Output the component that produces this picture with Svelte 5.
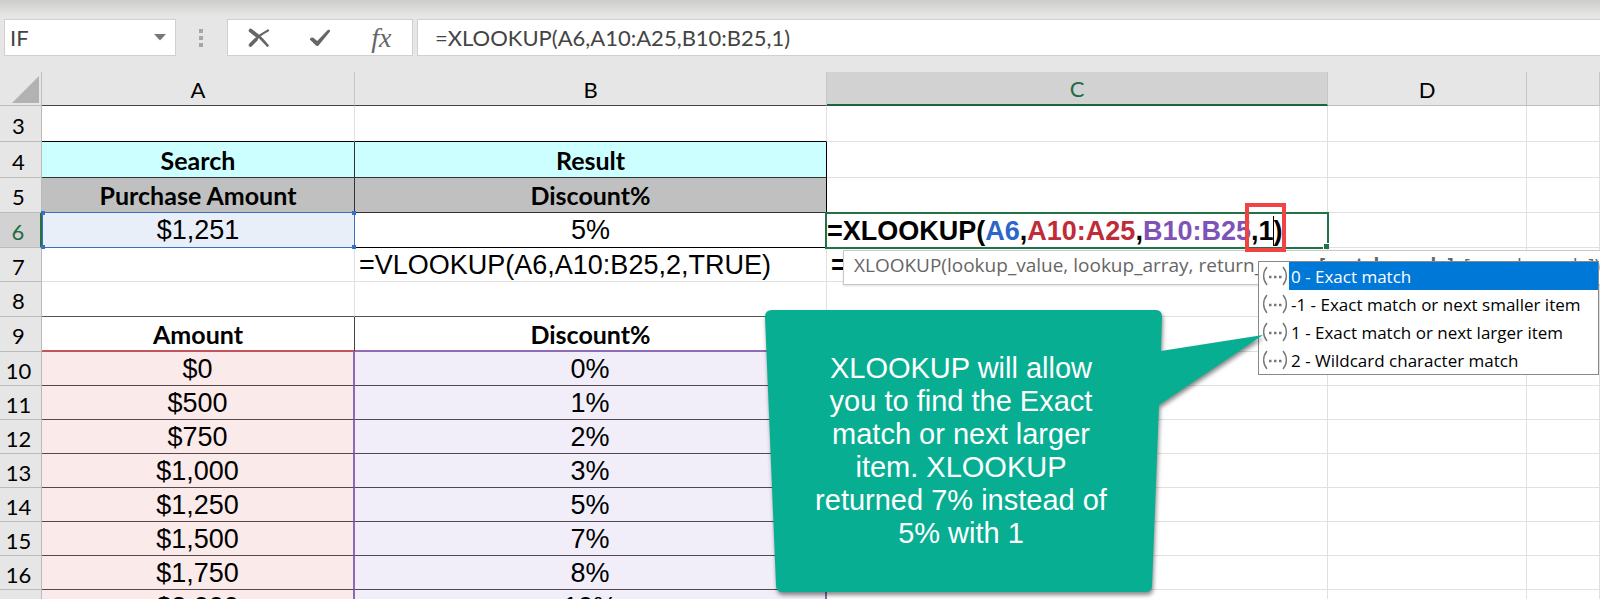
<script>
let nameBox = 'IF';
let formula = '=XLOOKUP(A6,A10:A25,B10:B25,1)';
let picked = 0;

const columns = ['A', 'B', 'C', 'D', ''];

const rows = [
    { n: 3, height: 36, kind: 'blank', a: '', b: '' },
    { n: 4, height: 36, kind: 'search', a: 'Search', b: 'Result' },
    { n: 5, height: 35, kind: 'sub', a: 'Purchase Amount', b: 'Discount%' },
    { n: 6, height: 35, kind: 'active', a: '$1,251', b: '5%' },
    { n: 7, height: 34, kind: 'note', a: '', b: '=VLOOKUP(A6,A10:B25,2,TRUE)', c: '=' },
    { n: 8, height: 35, kind: 'spacer', a: '', b: '' },
    { n: 9, height: 35, kind: 'title', a: 'Amount', b: 'Discount%' },
    { n: 10, height: 34, kind: 'data', a: '$0', b: '0%' },
    { n: 11, height: 34, kind: 'data', a: '$500', b: '1%' },
    { n: 12, height: 34, kind: 'data', a: '$750', b: '2%' },
    { n: 13, height: 34, kind: 'data', a: '$1,000', b: '3%' },
    { n: 14, height: 34, kind: 'data', a: '$1,250', b: '5%' },
    { n: 15, height: 34, kind: 'data', a: '$1,500', b: '7%' },
    { n: 16, height: 34, kind: 'data', a: '$1,750', b: '8%' },
    { n: 17, height: 34, kind: 'data', a: '$2,000', b: '10%' }
];

const options = [
    '0 - Exact match',
    '-1 - Exact match or next smaller item',
    '1 - Exact match or next larger item',
    '2 - Wildcard character match'
];
</script>

<div class="app">
    <header class="bar">
        <div class="namebox">
            <input aria-label="Name box" bind:value={nameBox} />
            <button aria-label="Open name list">
                <svg width="12" height="7" viewBox="0 0 12 7"><path d="M0 0h12L6 6.5z" fill="#777" /></svg>
            </button>
        </div>
        <svg class="grip" width="4" height="18" viewBox="0 0 4 18" fill="#a6a6a6">
            <rect width="4" height="4" /><rect y="7" width="4" height="4" /><rect y="14" width="4" height="4" />
        </svg>
        <div class="actions">
            <button aria-label="Cancel">
                <svg width="22" height="20" viewBox="0 0 22 20" fill="none" stroke="#666" stroke-linecap="round">
                    <path d="M2.5 2.5C7 5 14 11 19.5 17.5" stroke-width="2.6" />
                    <path d="M2.5 2.5L10 8.5" stroke-width="3.6" />
                    <path d="M20 2.5C14 5.5 8 10 2.5 17" stroke-width="2.2" />
                    <path d="M2.5 17L8 11.5" stroke-width="3.6" />
                </svg>
            </button>
            <button aria-label="Enter">
                <svg width="22" height="18" viewBox="0 0 22 18"><path d="M.8 10.5C1.500 8.500 3.500 8 5 9.200L8.200 12 18.500 1.200C19.500.3 21.500 1 21 2.500L9.500 16.500Q8.300 17.600 7 16.500z" fill="#666" /></svg>
            </button>
            <button class="fx" aria-label="Insert function">fx</button>
        </div>
        <input class="formula" aria-label="Formula bar" bind:value={formula} />
    </header>

    <div class="sheet">
        <table>
            <colgroup>
                <col class="w-head" /><col class="w-a" /><col class="w-b" /><col class="w-c" /><col class="w-d" /><col />
            </colgroup>
            <thead>
                <tr>
                    <th class="corner" aria-label="Select all">
                        <svg width="27" height="27" viewBox="0 0 27 27"><path d="M27 0v27H0z" fill="#b2b2b2" /></svg>
                    </th>
                    {#each columns as col}
                    <th class="col" class:dark={col === 'A' || col === 'B'} class:current={col === 'C'}>{col}</th>
                    {/each}
                </tr>
            </thead>
            <tbody>
                {#each rows as row}
                <tr class={row.kind} style="height: {row.height}px">
                    <th class="num">{row.n}</th>
                    <td class="a">{row.a}{#if row.kind === 'active'}<span class="range"><i></i><i></i><i></i><i></i></span>{/if}</td>
                    <td class="b">{row.b}</td>
                    <td class="c">
                        {#if row.kind === 'active'}
                        <div class="editor">=XLOOKUP(<span class="blue">A6</span>,<span class="red">A10:A25</span>,<span class="purple">B10:B25</span><span class="boxed">,1<span class="caret"></span>)</span></div>
                        {:else}{row.c || ''}{/if}
                    </td>
                    <td></td>
                    <td></td>
                </tr>
                {/each}
            </tbody>
        </table>

        <div class="tip">XLOOKUP(lookup_value, lookup_array, return_array, <b>[match_mode]</b>, [search_mode])</div>

        <ul class="menu" role="listbox" aria-label="match_mode">
            {#each options as option, i}
            <li role="option" aria-selected={picked === i}>
                <svg width="26" height="20" viewBox="0 0 26 20" fill="none" stroke="#777" stroke-width="1.4">
                    <path d="M5 1C.5 6.500.5 13.500 5 19M21 1C25.500 6.500 25.500 13.500 21 19" />
                    <path d="M7 11h2.500M12 11h2.500M17 11h2.500" stroke-width="2.5" />
                </svg>
                <button on:click={() => picked = i}>{option}</button>
            </li>
            {/each}
        </ul>

        <div class="callout">
            <svg width="510" height="296" viewBox="0 0 510 296">
                <path d="M7 0H391Q397 0 397 7L396 41 498 25 394 95 387 276Q387 282 380 282H17Q11 282 11 275L0 7Q0 0 7 0z" fill="#08ae91" />
            </svg>
            <p>XLOOKUP will allow you to find the Exact match or next larger item. XLOOKUP returned 7% instead of 5% with 1</p>
        </div>
    </div>
</div>

<style>
:global(body) {margin: 0; overflow: hidden;}

.app {height: 100vh; overflow: hidden; background: linear-gradient(#cdcdcb, #e6e6e6 16px); font-family: Lato, "Liberation Sans", sans-serif; color: #000;}

button, input {border: 0; padding: 0; margin: 0; background: none; font: inherit; color: inherit; outline: none;}

button {display: flex; align-items: center; justify-content: center;}

.bar {display: flex; align-items: center; padding: 19px 0 16px 4px; font-size: 22px; color: #444;}

.namebox, .actions, .formula {box-sizing: border-box; height: 37px; background: #fff; border: 1px solid #d0d0d0;}

.namebox {display: flex; width: 172px; padding: 0 9px 0 5px;}
.namebox input {flex: 1; min-width: 0;}

.grip {margin: 0 24px 0 23px;}

.actions {display: flex; width: 186px;}
.actions button {flex: 1;}
.actions .fx {font: italic 28px "Liberation Serif", serif; color: #666;}

.formula {flex: 1; min-width: 0; margin-left: 4px; padding-left: 17px; border-right: 0;}

.sheet {position: relative;}

table {width: 100%; table-layout: fixed; border-collapse: separate; border-spacing: 0;}

.w-head {width: 42px;}
.w-a {width: 313px;}
.w-b {width: 472px;}
.w-c {width: 501px;}
.w-d {width: 199px;}

th, td {box-sizing: border-box; padding: 0; border: 0 solid #e0e0e0; border-width: 0 1px 1px 0; white-space: nowrap; line-height: 30px; font-weight: 400;}

thead th {height: 34px; padding-top: 2px; font-size: 22px; border-color: #bdbdbd; background: #e6e6e6;}
.col {border-right-color: #c6c6c6;}
.col.dark {border-bottom-color: #444;}
.col.current {background: #d2d2d2; color: #1f6b42; border-bottom: 2px solid #14683c;}
.corner {line-height: 0; text-align: right; padding-right: 2px;}

.num {background: #e6e6e6; border-color: #bbb; padding: 4px 4px 0 0; font-size: 22px; line-height: 28px;}
.active .num {background: #d2d2d2; color: #1f6b42; border-right: 2px solid #217346;}

td {position: relative; background: #fff; font-family: "Liberation Sans", Arial, sans-serif; font-size: 27px; text-align: center;}

.c {text-align: left; font-weight: 700; padding-left: 4px;}

.search td, .sub td, .title td {font-family: Lato, sans-serif; font-size: 25px; font-weight: 700;}
.blank .a, .blank .b {border-bottom-color: #000;}
.search .a, .search .b {background: #cff; border-color: #333;}
.sub .a, .sub .b {background: #c0c0c0; border-color: #333;}
.search .b, .sub .b {border-right-color: #000;}
.active .b {border-bottom-color: #000;}
.active .a {background: #e9eff9;}
.note .b {text-align: left; padding-left: 4px;}
.spacer .a, .spacer .b {border-bottom-color: #555;}
.title .a {border-right-color: #444; border-bottom: 2px solid #c4545c;}
.title .b {border-bottom: 2px solid #8f6bb8;}
.data .a {background: #faeaea; border-bottom-color: #54484c; border-right: 2px solid #8a68b4;}
.data .b {background: #f1eef9; border-bottom-color: #54484c; border-right: 2px solid #8a68b4;}

/* reference highlight drawn over the neighbouring cell borders */
.active .a {z-index: 1;}
.range {position: absolute; inset: -1px -1px -1px 0; border: 1px solid #3a6fc4;}
.range i {position: absolute; width: 4px; height: 4px; background: #3a6fc4;}
.range i:nth-child(1) {top: -2px; left: -2px;}
.range i:nth-child(2) {top: -2px; right: -2px;}
.range i:nth-child(3) {bottom: -2px; left: -2px;}
.range i:nth-child(4) {bottom: -2px; right: -2px;}

.editor {position: absolute; z-index: 3; inset: -1px -2px -2px -2px; border: 2px solid #217346; background: #fff; line-height: 34px;}
.editor::after {content: ''; position: absolute; right: -2px; bottom: -2px; width: 5px; height: 5px; background: #217346; border: 1px solid #fff; border-width: 1px 0 0 1px;}
.blue {color: #2b66c8;}
.red {color: #c02b38;}
.purple {color: #7f52b5;}
.boxed {position: relative;}
.boxed::after {content: ''; position: absolute; inset: -13px -4px -6px -6px; border: 4px solid #f04444;}
.caret {position: absolute; top: 0; bottom: 0; border-left: 1px solid #000;}

.tip {position: absolute; z-index: 2; top: 178px; left: 843px; right: 0; height: 33px; padding-left: 10px; border: 1px solid #c8c8c8; border-width: 1px 0 1px 1px; background: #fff; overflow: hidden; white-space: nowrap; font-family: "Open Sans", sans-serif; font-size: 19px; line-height: 28px; color: #666; box-shadow: 0 1px 2px #0002;}

.menu {position: absolute; z-index: 3; top: 189px; left: 1258px; right: 1px; margin: 0; padding: 0; list-style: none; border: 1px solid #888; background: #fff; font-family: "Open Sans", sans-serif; font-size: 17px;}
.menu li {display: flex; align-items: center; height: 28px;}
.menu svg {flex: none; margin: 0 1px 0 3px;}
.menu button {flex: 1; height: 28px; justify-content: flex-start; padding-left: 2px; white-space: nowrap;}
.menu [aria-selected="true"] button {background: #0078d7; color: #fff;}

.callout {position: absolute; z-index: 4; top: 238px; left: 765px;}
.callout svg {display: block; filter: drop-shadow(1px 3px 2px #0007);}
.callout p {position: absolute; top: 42px; left: 42px; width: 308px; margin: 0; text-align: center; font: 29px/33px "Liberation Sans", Arial, sans-serif; color: #fff;}
</style>
